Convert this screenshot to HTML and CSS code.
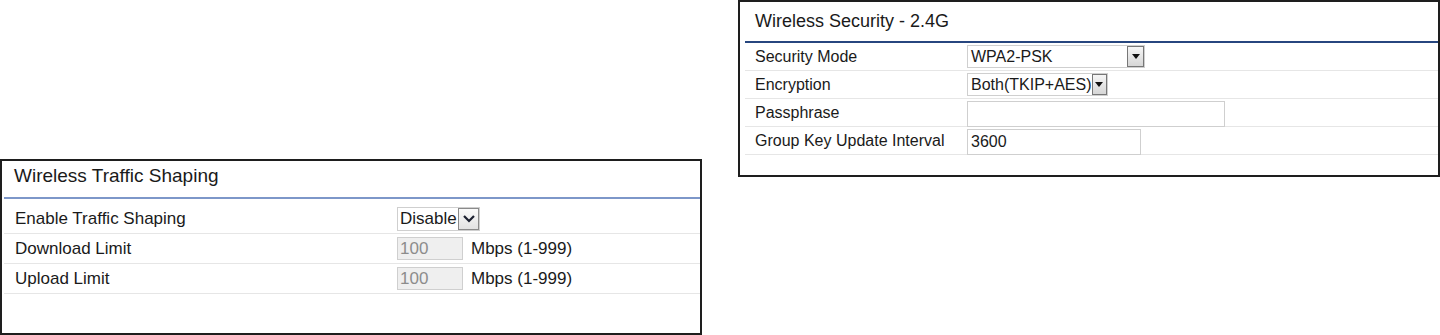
FILE: index.html
```html
<!DOCTYPE html>
<html lang="en">
<head>
    <meta charset="UTF-8">
    <title>Wireless Settings</title>
    <link rel="stylesheet" href="styles.css">
</head>
<body>
    <div class="page">
        <div class="panel traffic">
            <div class="panel-head"><h2>Wireless Traffic Shaping</h2></div>
            <div class="rows">
                <div class="row">
                    <div class="label">Enable Traffic Shaping</div>
                    <div class="field">
                        <div class="combo combo-old">
                            <span class="combo-text">Disable</span>
                            <span class="combo-btn">
                                <svg width="14" height="10" viewBox="0 0 14 10"><path d="M2 2 L7 7 L12 2" fill="none" stroke="#1b2030" stroke-width="2.2"/></svg>
                            </span>
                        </div>
                    </div>
                </div>
                <div class="row">
                    <div class="label">Download Limit</div>
                    <div class="field">
                        <input class="box box-off" type="text" value="100" disabled>
                        <span class="unit">Mbps (1-999)</span>
                    </div>
                </div>
                <div class="row">
                    <div class="label">Upload Limit</div>
                    <div class="field">
                        <input class="box box-off" type="text" value="100" disabled>
                        <span class="unit">Mbps (1-999)</span>
                    </div>
                </div>
            </div>
        </div>

        <div class="panel security">
            <div class="panel-head"><h2>Wireless Security - 2.4G</h2></div>
            <div class="rows">
                <div class="row">
                    <div class="label">Security Mode</div>
                    <div class="field">
                        <div class="combo combo-mode">
                            <span class="combo-text">WPA2-PSK</span>
                            <span class="combo-btn">
                                <svg width="8" height="5" viewBox="0 0 8 5"><path d="M0 0 H8 L4 5 Z" fill="#111"/></svg>
                            </span>
                        </div>
                    </div>
                </div>
                <div class="row">
                    <div class="label">Encryption</div>
                    <div class="field">
                        <div class="combo combo-enc">
                            <span class="combo-text">Both(TKIP+AES)</span>
                            <span class="combo-btn">
                                <svg width="8" height="5" viewBox="0 0 8 5"><path d="M0 0 H8 L4 5 Z" fill="#111"/></svg>
                            </span>
                        </div>
                    </div>
                </div>
                <div class="row">
                    <div class="label">Passphrase</div>
                    <div class="field">
                        <input class="box box-pass" type="password" value="">
                    </div>
                </div>
                <div class="row">
                    <div class="label">Group Key Update Interval</div>
                    <div class="field">
                        <input class="box box-key" type="text" value="3600">
                    </div>
                </div>
            </div>
        </div>
    </div>
</body>
</html>
```

FILE: styles.css
```css
body {
    margin: 0;
    padding: 0;
    background-color: #fff;
    color: #1a1a1a;
    font-family: "Liberation Sans", Arial, sans-serif;
}

.page {
    display: flex;
    align-items: flex-start;
    gap: 36px;
}

.panel {
    box-sizing: border-box;
    width: 702px;
    border: 2px solid #1e1e1e;
    background: #fff;
}

.panel h2 {
    margin: 0;
    font-weight: normal;
}

.row {
    display: flex;
    align-items: center;
    border-bottom: 1px solid #e6e6e6;
}

.field {
    display: flex;
    align-items: center;
}

.box {
    box-sizing: border-box;
    margin: 0;
    border: 1px solid #cfcfcf;
    background: #fff;
    color: #1a1a1a;
    font-family: "Liberation Sans", Arial, sans-serif;
    outline: none;
}

.combo {
    box-sizing: border-box;
    display: flex;
    align-items: center;
    border: 1px solid #cfcfcf;
    background: #fff;
}

.combo-text {
    flex: 1;
    white-space: nowrap;
}

.combo-btn {
    box-sizing: border-box;
    display: flex;
    align-items: center;
    justify-content: center;
    border: 1px solid #777;
    background: linear-gradient(#f6f6f6, #d6d6d6);
}

/* traffic shaping */

.traffic {
    margin-top: 159px;
    height: 176px;
    font-size: 17px;
}

.traffic .panel-head {
    height: 36px;
    margin-left: 2px;
    border-bottom: 2px solid #7d97c9;
}

.traffic h2 {
    font-size: 19px;
    line-height: 29px;
    padding-left: 10px;
}

.traffic .rows {
    margin: 5px 0 0 2px;
}

.traffic .row {
    height: 29px;
}

.traffic .label {
    width: 382px;
    padding-left: 11px;
}

.combo-old {
    width: 83px;
    height: 24px;
    padding-left: 2px;
}

.combo-old .combo-btn {
    width: 21px;
    height: 22px;
    border-color: #8a8a8a;
    background: linear-gradient(#fafafa, #e2e2e2);
}

.box-off {
    width: 66px;
    height: 23px;
    padding-left: 2px;
    background: #efefef;
    color: #8c8c8c;
    font-size: 17px;
}

.unit {
    margin-left: 8px;
}

/* security */

.security {
    height: 177px;
    font-size: 16px;
}

.security .panel-head {
    height: 39px;
    margin-left: 5px;
    border-bottom: 2px solid #27467f;
}

.security h2 {
    font-size: 18px;
    line-height: 38px;
    padding-left: 10px;
}

.security .rows {
    margin-left: 5px;
}

.security .row {
    height: 27px;
}

.security .label {
    width: 212px;
    padding-left: 10px;
}

.combo-mode,
.combo-enc {
    height: 23px;
    padding-left: 3px;
}

.combo-mode {
    width: 178px;
}

.combo-enc {
    width: 141px;
}

.security .combo-btn {
    width: 17px;
    height: 21px;
}

.box-pass {
    width: 258px;
    height: 26px;
    margin-top: 3px;
}

.box-key {
    width: 174px;
    height: 26px;
    margin-top: 3px;
    padding-left: 3px;
    font-size: 16px;
}
```
